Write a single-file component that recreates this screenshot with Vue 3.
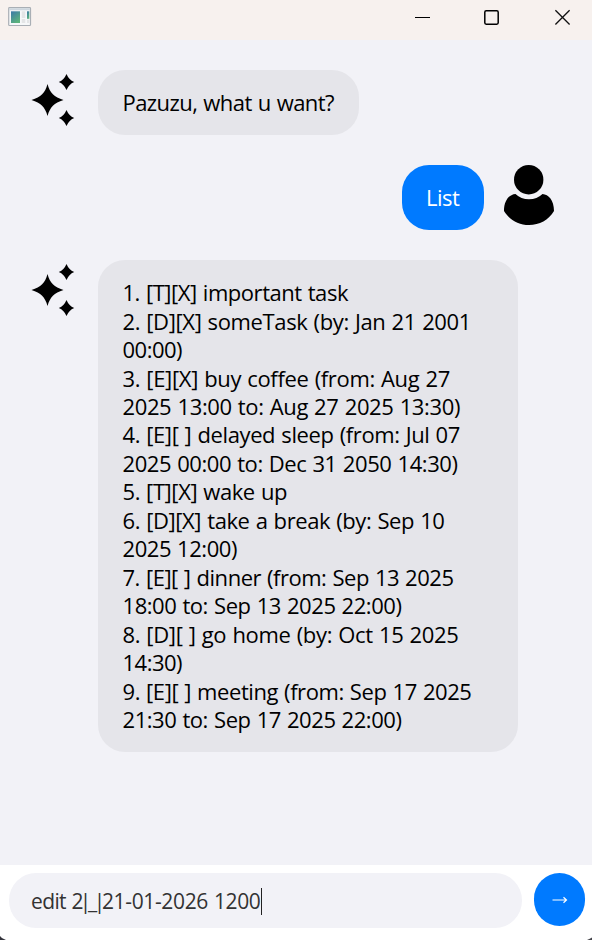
<script setup>
import { ref, onMounted } from 'vue'

const messages = [
  { from: 'bot', lines: [{ t: 'Pazuzu, what u want?', w: 211.5 }] },
  { from: 'user', lines: [{ t: 'List', w: 33.5 }] },
  {
    from: 'bot',
    wide: true,
    lines: [
      { t: '1. [T][X] important task', w: 225.5 },
      { t: '2. [D][X] someTask (by: Jan 21 2001', w: 348.5 },
      { t: '00:00)', w: 59.5 },
      { t: '3. [E][X] buy coffee (from: Aug 27', w: 327.5 },
      { t: '2025 13:00 to: Aug 27 2025 13:30)', w: 337.5 },
      { t: '4. [E][ ] delayed sleep (from: Jul 07', w: 337.5 },
      { t: '2025 00:00 to: Dec 31 2050 14:30)', w: 335 },
      { t: '5. [T][X] wake up', w: 164.5 },
      { t: '6. [D][X] take a break (by: Sep 10', w: 322 },
      { t: '2025 12:00)', w: 114.5 },
      { t: '7. [E][ ] dinner (from: Sep 13 2025', w: 331 },
      { t: '18:00 to: Sep 13 2025 22:00)', w: 279 },
      { t: '8. [D][ ] go home (by: Oct 15 2025', w: 336 },
      { t: '14:30)', w: 59.5 },
      { t: '9. [E][ ] meeting (from: Sep 17 2025', w: 349 },
      { t: '21:30 to: Sep 17 2025 22:00)', w: 279 }
    ]
  }
]
const draft = [
  { t: 'edit 2', w: 52 },
  { t: '|_|', w: 22.2, separator: true },
  { t: '21-01-2026 1200', w: 158.6 }
]

const root = ref(null)

// Tracks each line so that its advance equals the width given in the data.
onMounted(() => {
  root.value.querySelectorAll('[data-w]').forEach((el) => {
    const natural = el.getBoundingClientRect().width
    const spacing = (Number(el.dataset.w) - natural) / el.textContent.length
    el.style.letterSpacing = spacing + 'px'
  })
})
</script>

<template>
  <div ref="root" class="window">
    <header class="titlebar">
      <svg class="app-icon" width="24" height="20" viewBox="0 0 24 20">
        <defs>
          <linearGradient id="pane" x1="0" y1="0" x2="0.6" y2="1">
            <stop offset="0" stop-color="#3a78a8" />
            <stop offset="1" stop-color="#5cb37c" />
          </linearGradient>
        </defs>
        <rect x="0.7" y="0.7" width="21.8" height="17.8" rx="0.8" fill="#f6f8f9" stroke="#a9afb5" stroke-width="1.2" />
        <rect x="1.3" y="1.3" width="20.6" height="2" fill="#cdd6de" />
        <rect x="3" y="4.3" width="9" height="11.7" fill="url(#pane)" />
        <rect x="13.7" y="4.3" width="3.6" height="6.7" fill="#e3e5e6" />
        <rect x="13.7" y="12" width="3.6" height="4" fill="#e3e5e6" />
        <rect x="19" y="4.3" width="2.3" height="7.5" fill="url(#pane)" />
        <rect x="19" y="12.6" width="2.3" height="3.4" fill="#e3e5e6" />
      </svg>
      <div class="controls">
        <svg width="16" height="16" viewBox="0 0 16 16"><path d="M0 8.5H15" stroke="#000" stroke-width="1" /></svg>
        <svg width="16" height="16" viewBox="0 0 16 16"><rect x="-0.2" y="1.8" width="13.4" height="13.4" rx="1.4" fill="none" stroke="#000" stroke-width="1.5" /></svg>
        <svg width="16" height="16" viewBox="0 0 16 16"><path d="M0.400 1.300L14.600 15.500M14.600 1.300L0.400 15.500" stroke="#111" stroke-width="1.3" /></svg>
      </div>
    </header>

    <main class="chat">
      <div v-for="(m, i) in messages" :key="i" class="row" :class="m.from">
        <svg v-if="m.from === 'bot'" class="sparkles" width="50" height="60" viewBox="0 0 50 60">
          <path d="M19.5 14C22 23 26 27 35.5 30C26 33 22 37 19.5 46C17 37 13 33 3.5 30C13 27 17 23 19.5 14Z" />
          <path d="M38.5 4Q40.8 9.7 46.2 12Q40.8 14.3 38.5 20Q36.2 14.3 30.8 12Q36.2 9.7 38.5 4Z" />
          <path d="M38.5 40Q40.8 45.7 46.2 48Q40.8 50.3 38.5 56Q36.2 50.3 30.8 48Q36.2 45.7 38.5 40Z" />
        </svg>
        <div class="bubble" :class="{ wide: m.wide }">
          <div v-for="(l, j) in m.lines" :key="j" class="line"><span :data-w="l.w">{{ l.t }}</span></div>
        </div>
        <svg v-if="m.from === 'user'" class="person" width="50" height="60" viewBox="0 0 50 60">
          <circle cx="24.7" cy="14.7" r="14.7" />
          <path d="M11.500 29Q17 34.300 25 34.300Q33 34.300 38.500 29C44.500 29.500 50 35 50 46C44.500 55 35.500 60 25 60C14.500 60 5.500 55 0 46C0 35 5.500 29.500 11.500 29Z" />
        </svg>
      </div>
    </main>

    <footer class="composer">
      <div class="field"><span v-for="(p, k) in draft" :key="k" :class="{ separator: p.separator }" :data-w="p.w">{{ p.t }}</span><i class="caret"></i></div>
      <div class="send">
        <svg width="16" height="8" viewBox="0 0 16 8"><path d="M0.500 4H14M11.500 1.200L14.500 4L11.500 6.800" fill="none" stroke="#fff" stroke-width="1.2" /></svg>
      </div>
      <svg class="corner left" width="7" height="4" viewBox="0 0 7 4"><path d="M0 0Q1.500 2.700 6 4H0Z" fill="#33333b" /></svg>
      <svg class="corner right" width="7" height="4" viewBox="0 0 7 4"><path d="M7 1.500Q5 2.700 2 4H7Z" fill="#44444a" /></svg>
    </footer>
  </div>
</template>

<style>
body {
  margin: 0;
}
</style>

<style scoped>
.window {
  display: flex;
  flex-direction: column;
  width: 592px;
  height: 940px;
  overflow: hidden;
  background: #f2f2f7;
  font-family: "Open Sans", "Noto Sans", sans-serif;
  font-size: 22px;
  line-height: 28.45px;
  word-spacing: 0.8px;
  color: #000;
}
.titlebar {
  display: flex;
  justify-content: space-between;
  height: 40px;
  box-sizing: border-box;
  padding: 7px 21px 0 8px;
  background: #f7f1ee;
}
.app-icon {
  display: block;
}
.controls {
  display: flex;
  gap: 54px;
  padding-top: 2px;
}
.controls svg {
  display: block;
  overflow: visible;
}
.chat {
  flex: 1;
  display: flex;
  flex-direction: column;
  gap: 30px;
  padding: 30px 38px 0 28px;
}
.row {
  display: flex;
  align-items: flex-start;
  gap: 20px;
}
.row.user {
  justify-content: flex-end;
}
.row svg {
  display: block;
  flex: none;
}
.bubble {
  box-sizing: border-box;
  padding: 18.26px 24.5px;
  border-radius: 27px;
  background: #e5e5ea;
}
.bubble.wide {
  width: 420px;
}
.user .bubble {
  background: #007aff;
  color: #fff;
}
.line {
  white-space: pre;
}
.composer {
  position: relative;
  display: flex;
  gap: 12px;
  height: 75px;
  box-sizing: border-box;
  padding: 8px 7px 0 9px;
  background: #fff;
}
.field {
  display: flex;
  align-items: center;
  flex: 1;
  height: 55px;
  box-sizing: border-box;
  padding: 1px 0 0 22px;
  border-radius: 27px;
  background: #f2f2f7;
  color: #333;
  font-size: 21px;
  white-space: pre;
}
.separator {
  margin-left: -3.3px;
}
.caret {
  width: 1px;
  height: 27px;
  background: #222;
}
.send {
  display: flex;
  align-items: center;
  justify-content: center;
  width: 51px;
  height: 53px;
  border-radius: 26px;
  background: #007aff;
}
.corner {
  position: absolute;
  bottom: 0;
}
.corner.left {
  left: 0;
}
.corner.right {
  right: 0;
}
</style>
